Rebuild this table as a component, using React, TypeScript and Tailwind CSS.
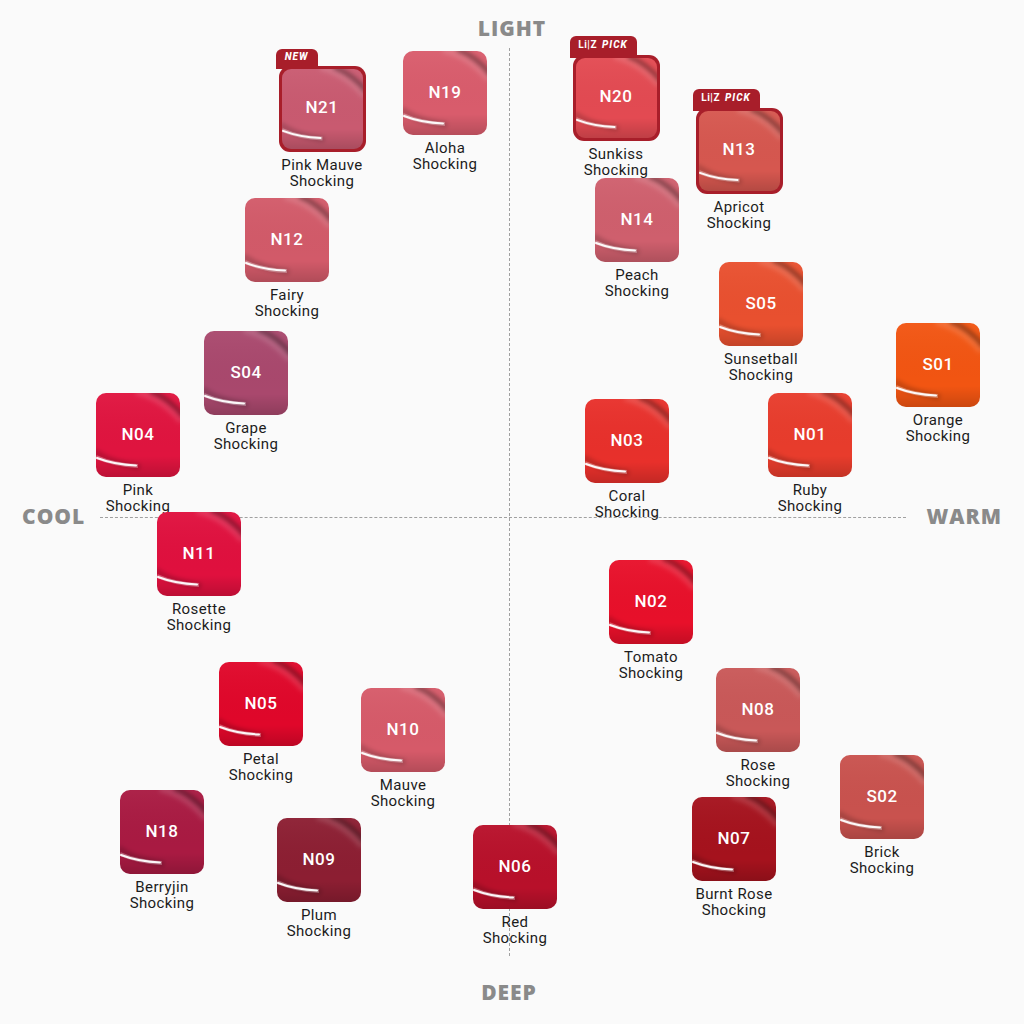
import React from "react";

type Badge = "NEW" | "LIZ";

type Shade = {
  code: string;
  name: string[];
  color: string;
  cx: number;
  top: number;
  badge?: Badge;
};

const shades: Shade[] = [
  { code: "N21", name: ["Pink Mauve", "Shocking"], color: "#c95a70", cx: 322, top: 66, badge: "NEW" },
  { code: "N19", name: ["Aloha", "Shocking"], color: "#d95c6c", cx: 445, top: 51 },
  { code: "N20", name: ["Sunkiss", "Shocking"], color: "#e34a52", cx: 616, top: 55, badge: "LIZ" },
  { code: "N13", name: ["Apricot", "Shocking"], color: "#d6574f", cx: 739, top: 108, badge: "LIZ" },
  { code: "N14", name: ["Peach", "Shocking"], color: "#cf5f6d", cx: 637, top: 178 },
  { code: "N12", name: ["Fairy", "Shocking"], color: "#d25a69", cx: 287, top: 198 },
  { code: "S05", name: ["Sunsetball", "Shocking"], color: "#e9502f", cx: 761, top: 262 },
  { code: "S01", name: ["Orange", "Shocking"], color: "#f25512", cx: 938, top: 323 },
  { code: "S04", name: ["Grape", "Shocking"], color: "#a9486d", cx: 246, top: 331 },
  { code: "N04", name: ["Pink", "Shocking"], color: "#e0143f", cx: 138, top: 393 },
  { code: "N03", name: ["Coral", "Shocking"], color: "#e8302b", cx: 627, top: 399 },
  { code: "N01", name: ["Ruby", "Shocking"], color: "#e83c2c", cx: 810, top: 393 },
  { code: "N11", name: ["Rosette", "Shocking"], color: "#e0103e", cx: 199, top: 512 },
  { code: "N02", name: ["Tomato", "Shocking"], color: "#e8102a", cx: 651, top: 560 },
  { code: "N05", name: ["Petal", "Shocking"], color: "#e0072a", cx: 261, top: 662 },
  { code: "N10", name: ["Mauve", "Shocking"], color: "#d65a69", cx: 403, top: 688 },
  { code: "N08", name: ["Rose", "Shocking"], color: "#c95858", cx: 758, top: 668 },
  { code: "S02", name: ["Brick", "Shocking"], color: "#c9524e", cx: 882, top: 755 },
  { code: "N18", name: ["Berryjin", "Shocking"], color: "#a91a42", cx: 162, top: 790 },
  { code: "N09", name: ["Plum", "Shocking"], color: "#8c1e32", cx: 319, top: 818 },
  { code: "N06", name: ["Red", "Shocking"], color: "#b8102a", cx: 515, top: 825 },
  { code: "N07", name: ["Burnt Rose", "Shocking"], color: "#a5121d", cx: 734, top: 797 },
];

// glossy lipstick-smear look: dark fold at top right, white streak bottom left
function Gloss({ id }: { id: string }) {
  return (
    <svg className="absolute inset-0 w-full h-full" viewBox="0 0 84 84" preserveAspectRatio="none">
      <defs>
        <filter id={`blur-${id}`} x="-50%" y="-50%" width="200%" height="200%">
          <feGaussianBlur stdDeviation="2.2" />
        </filter>
        <filter id={`soft-${id}`} x="-50%" y="-50%" width="200%" height="200%">
          <feGaussianBlur stdDeviation="0.5" />
        </filter>
        <linearGradient id={`shade-${id}`} x1="0" y1="0" x2="0" y2="1">
          <stop offset="0" stopColor="#fff" stopOpacity="0.04" />
          <stop offset="0.75" stopColor="#000" stopOpacity="0" />
          <stop offset="1" stopColor="#000" stopOpacity="0.16" />
        </linearGradient>
      </defs>
      <rect width="84" height="84" fill={`url(#shade-${id})`} />
      <path d="M40 -2 Q66 4 86 28" fill="none" stroke="#fff" strokeOpacity="0.12" strokeWidth="8" filter={`url(#blur-${id})`} />
      <path d="M54 -2 Q74 6 88 24" fill="none" stroke="#000" strokeOpacity="0.35" strokeWidth="5" filter={`url(#blur-${id})`} />
      <path d="M-2 58 Q14 70 44 74" fill="none" stroke="#000" strokeOpacity="0.18" strokeWidth="6" filter={`url(#blur-${id})`} />
      <path d="M0 64 Q18 72 42 73" fill="none" stroke="#fff" strokeOpacity="0.3" strokeWidth="4" filter={`url(#soft-${id})`} />
      <path d="M1 65 Q18 71.5 40 72.5" fill="none" stroke="#fff" strokeOpacity="0.95" strokeWidth="2" strokeLinecap="round" />
    </svg>
  );
}

function BadgeTab({ kind }: { kind: Badge }) {
  if (kind === "NEW") {
    return (
      <div className="absolute -top-[17px] -left-[3px] h-[20px] w-[42px] rounded-t-[6px] bg-[#a81e2a] flex items-start justify-center pt-[2px]">
        <span className="text-[10px] leading-[12px] font-extrabold italic tracking-[1px] text-white">NEW</span>
      </div>
    );
  }
  return (
    <div className="absolute -top-[19px] -left-[3px] h-[22px] w-[67px] rounded-t-[6px] bg-[#a81e2a] flex items-start justify-center gap-[5px] pt-[3px]">
      <span className="text-[10px] leading-[12px] font-bold tracking-[0.5px] text-white">Li|Z</span>
      <span className="text-[10px] leading-[12px] font-extrabold italic tracking-[1px] text-white">PICK</span>
    </div>
  );
}

function Swatch({ s }: { s: Shade }) {
  const framed = !!s.badge;
  const chip = (
    <div
      className={`relative overflow-hidden ${framed ? "w-[81px] h-[80px] rounded-[9px]" : "w-[84px] h-[84px] rounded-[10px]"}`}
      style={{ backgroundColor: s.color }}
    >
      <Gloss id={s.code} />
      <div
        className={`absolute inset-x-0 text-center text-white text-[17px] leading-[20px] font-medium tracking-[0.5px] ${framed ? "top-[28px]" : "top-[31px]"}`}
      >
        {s.code}
      </div>
    </div>
  );
  return (
    <div className="absolute w-[130px] flex flex-col items-center" style={{ left: s.cx - 65, top: s.top }}>
      {framed ? (
        <div className="relative p-[3px] rounded-[11px] bg-[#a81e2a]">
          <BadgeTab kind={s.badge!} />
          {chip}
        </div>
      ) : (
        chip
      )}
      <div className="mt-[5px] text-center text-[15px] leading-[16px] font-normal text-[#1c1c1c] tracking-[0.4px]">
        {s.name.map((n) => (
          <div key={n}>{n}</div>
        ))}
      </div>
    </div>
  );
}

export default function App() {
  const axis = "text-[21px] leading-[28px] font-extrabold tracking-[1px] text-[#8a8a8a] font-['Open_Sans',sans-serif]";
  return (
    <div className="relative w-[1024px] h-[1024px] overflow-hidden bg-[#fafafa] font-['Roboto','Liberation_Sans',sans-serif]">
      {/* axes */}
      <div className="absolute left-[509px] top-[48px] h-[908px] border-l border-dashed border-[#a0a0a0]" />
      <div className="absolute left-[100px] top-[517px] w-[806px] border-t border-dashed border-[#a0a0a0]" />

      <div className="absolute inset-x-0 top-[14px] flex justify-center">
        <span className={axis}>LIGHT</span>
      </div>
      <div className="absolute inset-x-0 top-[978px] flex justify-center pr-[6px]">
        <span className={axis}>DEEP</span>
      </div>
      <div className="absolute inset-x-[22px] top-[502px] flex justify-between">
        <span className={axis}>COOL</span>
        <span className={axis}>WARM</span>
      </div>

      {shades.map((s) => (
        <Swatch key={s.code} s={s} />
      ))}
    </div>
  );
}
